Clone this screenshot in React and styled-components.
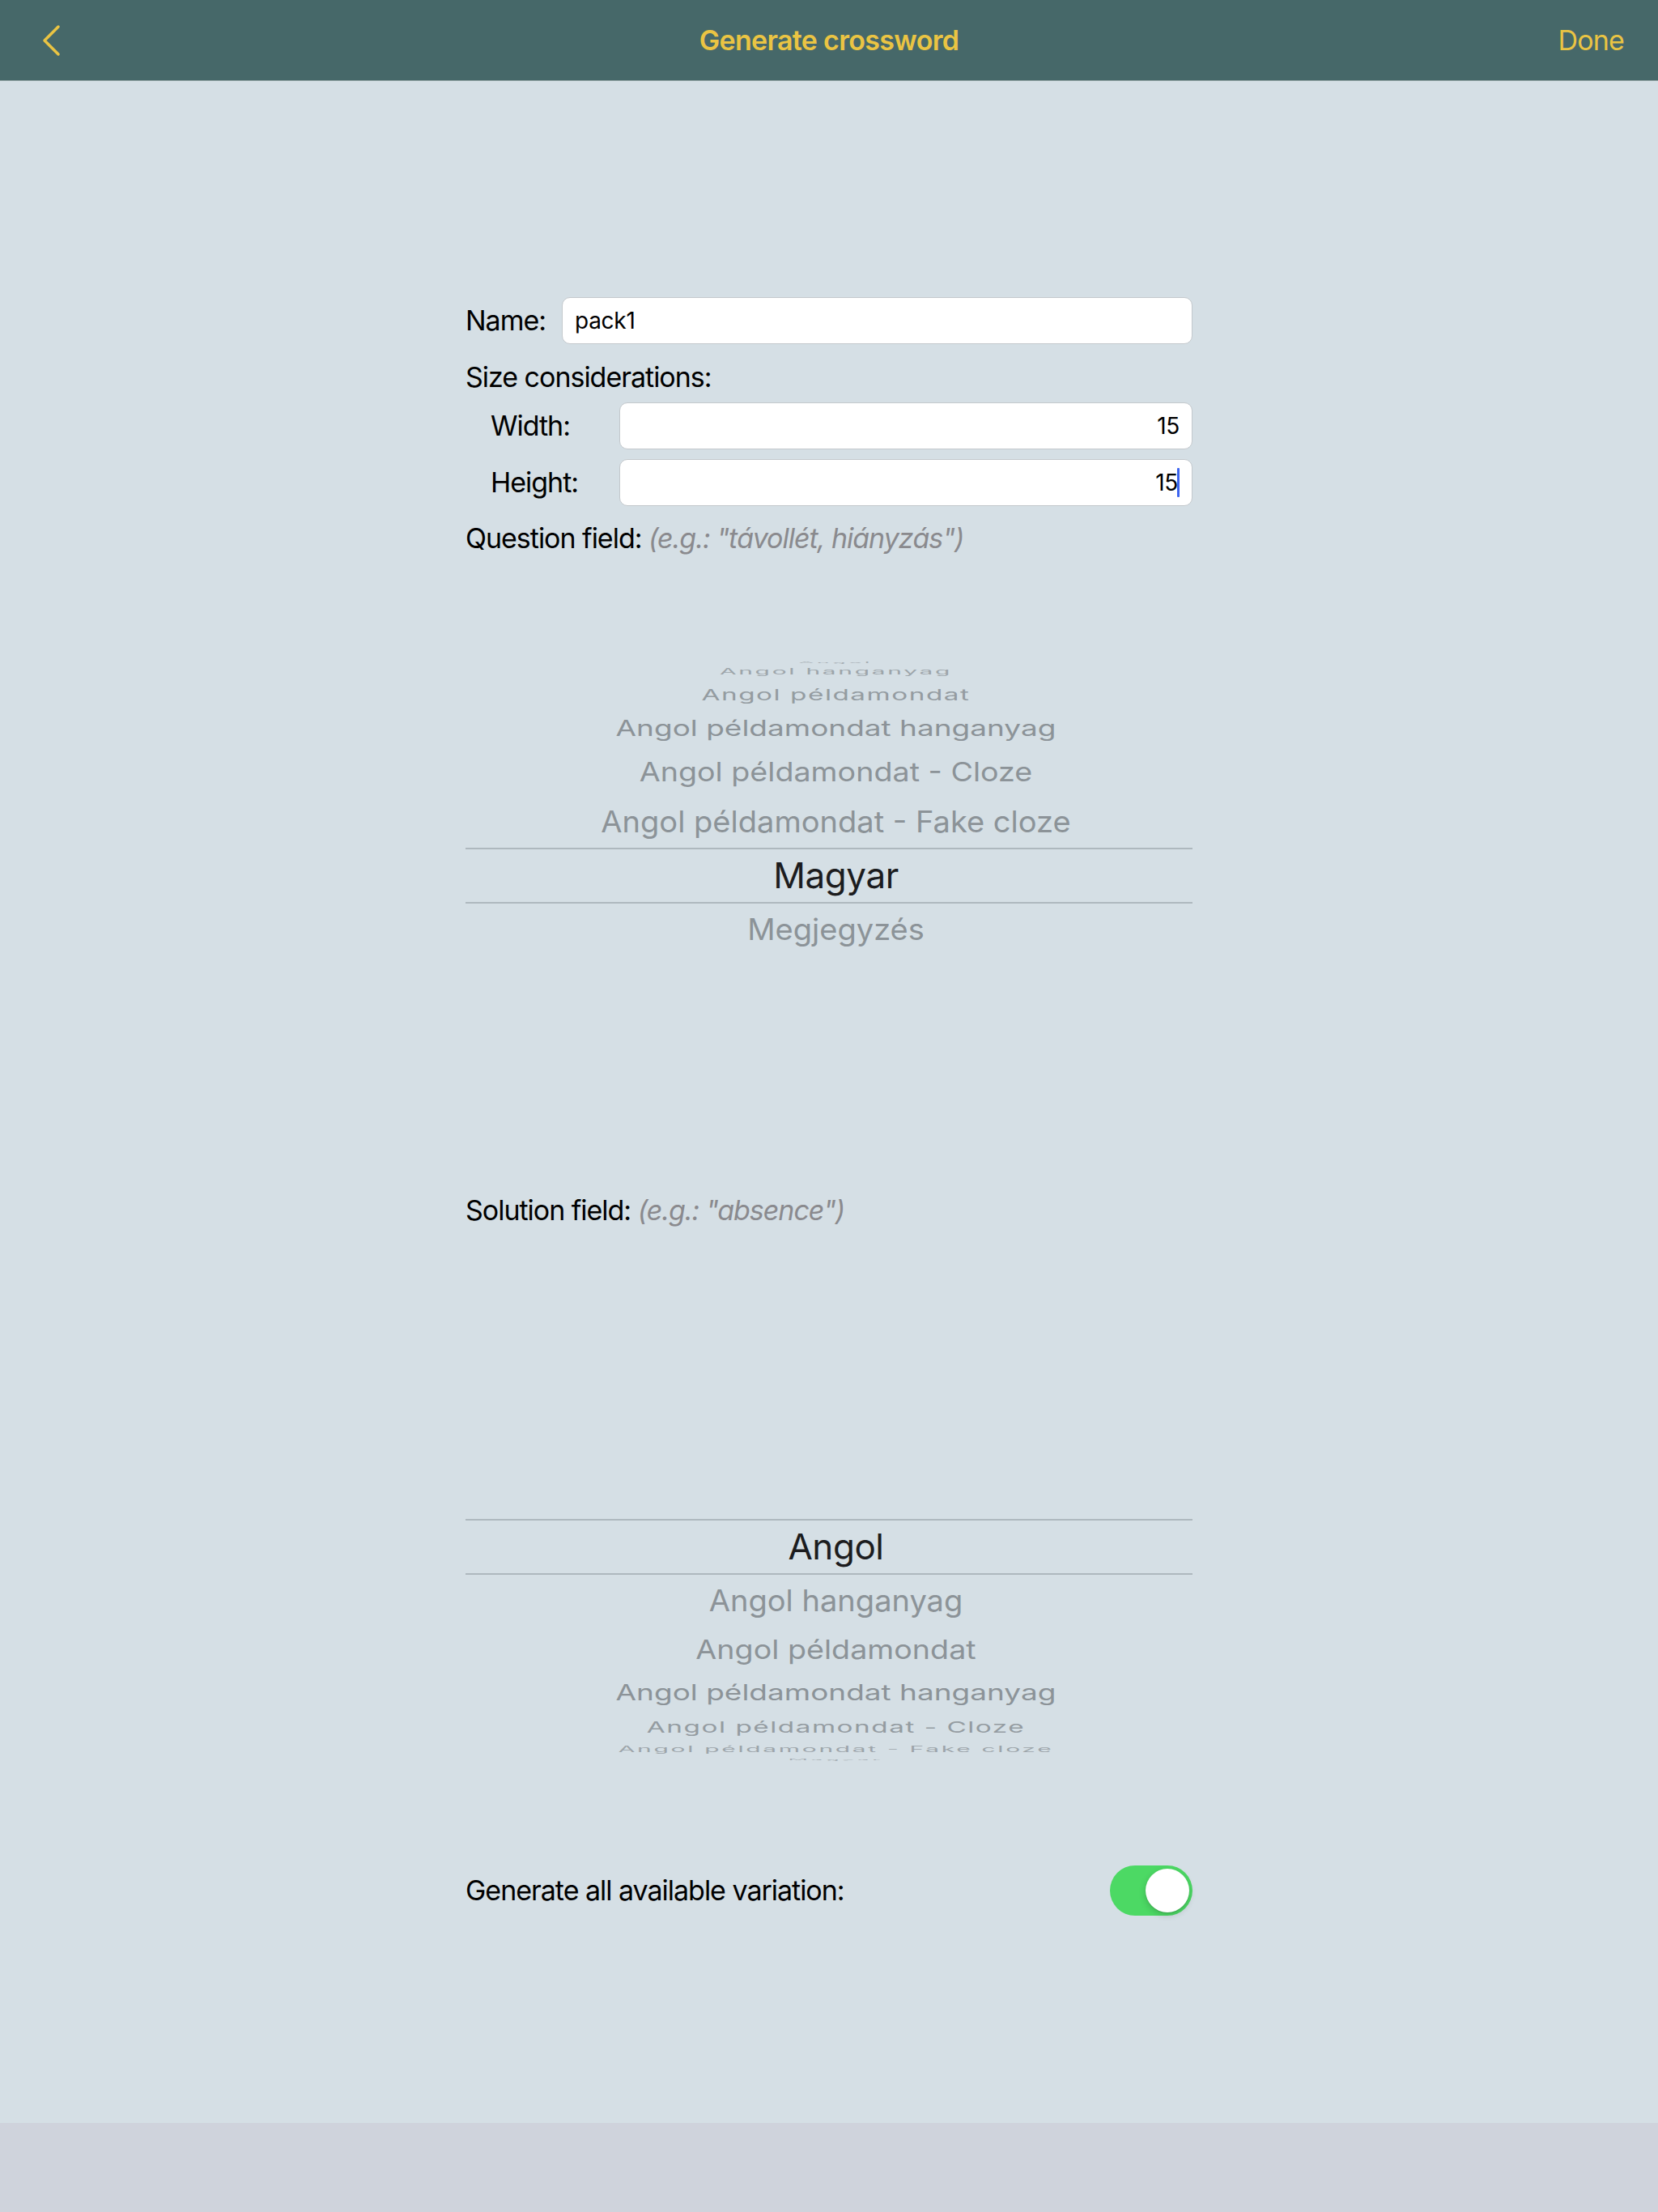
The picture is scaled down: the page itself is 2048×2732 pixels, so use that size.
import React from "react";
import styled, { createGlobalStyle } from "styled-components";

const GlobalStyle = createGlobalStyle`
  html, body { margin: 0; padding: 0; }
  body {
    background: #d5dfe5;
    font-family: Inter, "Noto Sans", "Liberation Sans", sans-serif;
    -webkit-font-smoothing: antialiased;
  }
`;

const Page = styled.div`
  min-height: 100vh;
  display: flex;
  flex-direction: column;
  background: #d5dfe5;
`;

const NavBar = styled.header`
  height: 99px;
  border-bottom: 1px solid #8a9b9c;
  background: #466869;
  display: grid;
  grid-template-columns: 1fr auto 1fr;
  align-items: center;
  color: #eac443;
`;

const BackButton = styled.div`
  justify-self: start;
  padding-left: 51px;
  display: flex;
  align-items: center;
`;

const Title = styled.div`
  font-size: 34px;
  font-weight: 600;
  letter-spacing: -0.02em;
`;

const DoneButton = styled.div`
  justify-self: end;
  padding-right: 42px;
  font-size: 34px;
  letter-spacing: -0.025em;
`;

const Main = styled.main`
  flex: 1;
`;

const Form = styled.div`
  width: 898px;
  margin: 0 auto;
  padding-top: 267px;
  display: flex;
  flex-direction: column;
  color: #000;
`;

const FieldRow = styled.div`
  display: flex;
  align-items: center;
  height: 58px;
  margin-top: ${(p) => p.$mt || 0}px;
  padding-left: ${(p) => p.$indent || 0}px;
`;

const RowLabel = styled.div`
  width: ${(p) => p.$w}px;
  flex: 0 0 auto;
  font-size: 34px;
  letter-spacing: -0.03em;
  line-height: 40px;
`;

const TextField = styled.div`
  flex: 1;
  height: 58px;
  box-sizing: border-box;
  background: #fff;
  border: 1px solid #c3c8cc;
  border-radius: 10px;
  display: flex;
  align-items: center;
  justify-content: ${(p) => (p.$align === "right" ? "flex-end" : "flex-start")};
  padding: 0 15px;
  font-size: 28px;
  letter-spacing: -0.01em;
  color: #000;
`;

const Caret = styled.span`
  display: inline-block;
  width: 3px;
  height: 36px;
  margin-left: -1px;
  background: #3c64f0;
  border-radius: 1px;
`;

const SectionLabel = styled.div`
  font-size: 34px;
  line-height: 40px;
  letter-spacing: -0.03em;
  margin-top: ${(p) => p.$mt || 0}px;
  white-space: nowrap;
`;

const Hint = styled.span`
  font-style: italic;
  color: #8a8a8e;
`;

const Wheel = styled.div`
  height: 788px;
  margin-top: ${(p) => p.$mt || 0}px;
  display: flex;
  flex-direction: column;
  font-size: 38.2px;
`;

const WheelSide = styled.div`
  flex: 1 1 0;
  min-height: 0;
  overflow: hidden;
  display: flex;
  flex-direction: column;
  justify-content: ${(p) => (p.$up ? "flex-end" : "flex-start")};
`;

const SelectedRow = styled.div`
  height: 69px;
  flex: 0 0 auto;
  box-sizing: border-box;
  border-top: 2px solid #aeb8be;
  border-bottom: 2px solid #aeb8be;
  padding-left: 17px;
  display: flex;
  align-items: center;
  justify-content: center;
  color: #1c1c1e;
  white-space: nowrap;
  font-size: 44px;
  letter-spacing: -0.01em;
`;

const WheelItem = styled.div`
  flex: 0 0 auto;
  padding-left: 17px;
  display: flex;
  align-items: center;
  justify-content: center;
  overflow: visible;
`;

const WheelText = styled.span`
  white-space: nowrap;
  line-height: 1.2;
  color: #8c9398;
  transform-origin: center center;
`;

const ToggleRow = styled.div`
  display: flex;
  align-items: center;
  justify-content: space-between;
  height: 62px;
`;

const ToggleLabel = styled.div`
  font-size: 34px;
  line-height: 40px;
  letter-spacing: -0.03em;
`;

const Switch = styled.div`
  width: 102px;
  height: 62px;
  border-radius: 31px;
  background: #4cd964;
  display: flex;
  align-items: center;
  justify-content: flex-end;
  padding: 0 4px;
  box-sizing: border-box;
`;

const Knob = styled.div`
  width: 54px;
  height: 54px;
  border-radius: 50%;
  background: #fff;
  box-shadow: 0 3px 8px rgba(0, 0, 0, 0.18), 0 1px 1px rgba(0, 0, 0, 0.12);
`;

const BottomBar = styled.div`
  height: 110px;
  background: #cfd3dc;
`;

const R = 265;
const STEP = 14.5;
const BAND = 69;
const rad = (d) => (d * Math.PI) / 180;
const boundary = (k) =>
  k === 0 ? BAND / 2 : R * Math.sin(rad(Math.min((k + 0.5) * STEP, 90)));

const itemGeometry = (i) => {
  const angle = i * STEP;
  const h = boundary(i) - boundary(i - 1);
  const p = 1 - 0.0035 * i * i;
  const ls = i >= 4 ? (i - 3) * 0.045 : 0;
  const f = (p * 0.55) / (0.55 + ls);
  const sy = (Math.cos(rad(angle)) * p) / f;
  const op = i >= 4 ? 1 - (i - 3) * 0.12 : 1;
  return { angle, h, f, sy, ls, op };
};

const PickerItem = ({ label, dist }) => {
  const g = itemGeometry(dist);
  if (g.angle >= 90) return null;
  return (
    <WheelItem style={{ height: `${g.h}px` }}>
      <WheelText
        style={{
          fontSize: `${g.f}em`,
          letterSpacing: `${g.ls}em`,
          transform: `scaleY(${g.sy})`,
          opacity: g.op,
        }}
      >
        {label}
      </WheelText>
    </WheelItem>
  );
};

const Picker = ({ items, selected, mt }) => {
  const above = items.slice(0, selected);
  const below = items.slice(selected + 1);
  return (
    <Wheel $mt={mt}>
      <WheelSide $up>
        {above.map((label, idx) => (
          <PickerItem key={label} label={label} dist={selected - idx} />
        ))}
      </WheelSide>
      <SelectedRow>{items[selected]}</SelectedRow>
      <WheelSide>
        {below.map((label, idx) => (
          <PickerItem key={label} label={label} dist={idx + 1} />
        ))}
      </WheelSide>
    </Wheel>
  );
};

const FIELDS = [
  "Angol",
  "Angol hanganyag",
  "Angol példamondat",
  "Angol példamondat hanganyag",
  "Angol példamondat - Cloze",
  "Angol példamondat - Fake cloze",
  "Magyar",
  "Megjegyzés",
];

const Chevron = () => (
  <svg width="26" height="42" viewBox="0 0 26 42" fill="none">
    <polyline
      points="21,4 4,21 21,38"
      stroke="#eac443"
      strokeWidth="3.5"
      strokeLinecap="round"
      strokeLinejoin="round"
    />
  </svg>
);

export default function App() {
  return (
    <Page>
      <GlobalStyle />
      <NavBar>
        <BackButton>
          <Chevron />
        </BackButton>
        <Title>Generate crossword</Title>
        <DoneButton>Done</DoneButton>
      </NavBar>
      <Main>
        <Form>
          <FieldRow>
            <RowLabel $w={119}>Name:</RowLabel>
            <TextField>pack1</TextField>
          </FieldRow>
          <SectionLabel $mt={21}>Size considerations:</SectionLabel>
          <FieldRow $mt={11} $indent={31}>
            <RowLabel $w={159}>Width:</RowLabel>
            <TextField $align="right">15</TextField>
          </FieldRow>
          <FieldRow $mt={12} $indent={31}>
            <RowLabel $w={159}>Height:</RowLabel>
            <TextField $align="right">
              15
              <Caret />
            </TextField>
          </FieldRow>
          <SectionLabel $mt={20}>
            Question field: <Hint>(e.g.: "távollét, hiányzás")</Hint>
          </SectionLabel>
          <Picker items={FIELDS} selected={6} mt={2} />
          <SectionLabel>
            Solution field: <Hint>(e.g.: "absence")</Hint>
          </SectionLabel>
          <Picker items={FIELDS} selected={0} mt={1} />
          <ToggleRow>
            <ToggleLabel>Generate all available variation:</ToggleLabel>
            <Switch>
              <Knob />
            </Switch>
          </ToggleRow>
        </Form>
      </Main>
      <BottomBar />
    </Page>
  );
}
